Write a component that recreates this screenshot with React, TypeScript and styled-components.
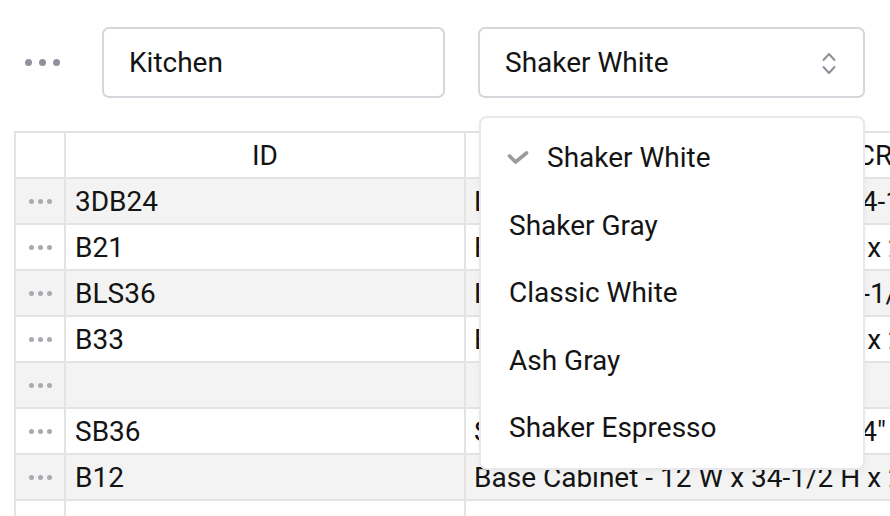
import React from "react";
import styled, { createGlobalStyle } from "styled-components";

const Global = createGlobalStyle`
  html, body { margin: 0; padding: 0; background: #ffffff; overflow: hidden; }
  body { font-family: Roboto, "Liberation Sans", Arial, sans-serif; color: #141414; }
  * { box-sizing: border-box; }
`;

const Page = styled.div`
  position: relative;
  width: 890px;
  height: 516px;
  overflow: hidden;
  background: #fff;
`;

const Toolbar = styled.div`
  display: flex;
  align-items: center;
  padding: 27px 0 0 25px;
`;

const Dots = styled.div<{ $size: number; $gap: number; $color: string }>`
  display: flex;
  align-items: center;
  gap: ${(p) => p.$gap}px;
  & > span {
    width: ${(p) => p.$size}px;
    height: ${(p) => p.$size}px;
    border-radius: 50%;
    background: ${(p) => p.$color};
  }
`;

const TextField = styled.input`
  margin-left: 42px;
  width: 343px;
  height: 71px;
  border: 2px solid #d4d7dc;
  border-radius: 7px;
  padding: 0 25px;
  font-family: Roboto, "Liberation Sans", Arial, sans-serif;
  font-size: 28px;
  color: #141414;
  background: #fff;
  outline: none;
`;

const SelectWrap = styled.div`
  position: relative;
  margin-left: 33px;
  width: 387px;
`;

const SelectButton = styled.div`
  display: flex;
  align-items: center;
  justify-content: space-between;
  height: 71px;
  border: 2px solid #d4d7dc;
  border-radius: 7px;
  padding: 0 27px 0 25px;
  font-size: 28px;
  color: #141414;
  background: #fff;
`;

const Menu = styled.div`
  position: absolute;
  top: calc(100% + 18px);
  left: 1px;
  right: 0;
  height: 354px;
  z-index: 10;
  background: #fff;
  border: 2px solid #e7e7ec;
  border-radius: 8px;
  padding: 6px 0 6px;
  box-shadow: 0 2px 6px rgba(0, 0, 0, 0.04);
`;

const MenuItem = styled.div`
  display: flex;
  align-items: center;
  height: 67.5px;
  padding-left: 28px;
  font-size: 28px;
  color: #141414;
  gap: 18px;
`;

const CheckIcon = styled.svg`
  margin-left: -2px;
  flex: none;
`;

const Table = styled.div`
  margin: 33px 0 0 14px;
  display: grid;
  grid-template-columns: 50px 400px 857px;
  grid-auto-rows: 46px;
  border-left: 2px solid #e3e3e3;
  border-top: 2px solid #e3e3e3;
  width: max-content;
`;

const Cell = styled.div<{ $alt?: boolean; $align?: "left" | "center"; $pad?: number }>`
  display: flex;
  align-items: center;
  justify-content: ${(p) => (p.$align === "center" ? "center" : "flex-start")};
  padding-left: ${(p) => p.$pad ?? 0}px;
  border-right: 2px solid #e3e3e3;
  border-bottom: 2px solid #e3e3e3;
  background: ${(p) => (p.$alt ? "#f3f3f3" : "#ffffff")};
  font-size: 28px;
  color: #141414;
  white-space: nowrap;
  overflow: hidden;
`;

const Chevrons = () => (
  <svg width="14" height="24" viewBox="0 0 14 24" fill="none">
    <path d="M1.5 9 L7 3 L12.5 9" stroke="#8b9099" strokeWidth="2" strokeLinecap="round" strokeLinejoin="round" />
    <path d="M1.5 16 L7 22 L12.5 16" stroke="#8b9099" strokeWidth="2" strokeLinecap="round" strokeLinejoin="round" />
  </svg>
);

const Check = () => (
  <CheckIcon width="22" height="14" viewBox="0 0 22 14" fill="none">
    <path d="M2.5 5 L8.5 11 L19.5 2" stroke="#9b9b9b" strokeWidth="3.6" strokeLinecap="round" strokeLinejoin="round" />
  </CheckIcon>
);

const ThreeDots = ({ size, gap, color }: { size: number; gap: number; color: string }) => (
  <Dots $size={size} $gap={gap} $color={color}>
    <span />
    <span />
    <span />
  </Dots>
);

const rows: { id: string; desc: string }[] = [
  { id: "3DB24", desc: "Drawer Base Cabinet - 24 W x 34-1/2 H x 24\" D" },
  { id: "B21", desc: "Base Cabinet - 21 W x 34-1/2 H x 24\" D" },
  { id: "BLS36", desc: "Lazy Susan Cabinet - 36 W x 34-1/2 H x 24\" D" },
  { id: "B33", desc: "Base Cabinet - 33 W x 34-1/2 H x 24\" D" },
  { id: "", desc: "" },
  { id: "SB36", desc: "Sink Base - 36 W x 34-1/2 H x 24\" D" },
  { id: "B12", desc: "Base Cabinet - 12 W x 34-1/2 H x 24\" D" },
];

const options = ["Shaker White", "Shaker Gray", "Classic White", "Ash Gray", "Shaker Espresso"];

export default function App() {
  return (
    <Page>
      <Global />
      <Toolbar>
        <ThreeDots size={7} gap={7} color="#8e939b" />
        <TextField defaultValue="Kitchen" />
        <SelectWrap>
          <SelectButton>
            <span>Shaker White</span>
            <Chevrons />
          </SelectButton>
          <Menu>
            {options.map((o, i) => (
              <MenuItem key={o}>
                {i === 0 && <Check />}
                <span>{o}</span>
              </MenuItem>
            ))}
          </Menu>
        </SelectWrap>
      </Toolbar>
      <Table>
        <Cell />
        <Cell $align="center">ID</Cell>
        <Cell $align="center">DESCRIPTION</Cell>
        {rows.map((r, i) => (
          <React.Fragment key={i}>
            <Cell $alt={i % 2 === 0} $align="center">
              <ThreeDots size={5} gap={4} color="#a7abb0" />
            </Cell>
            <Cell $alt={i % 2 === 0} $pad={9}>{r.id}</Cell>
            <Cell $alt={i % 2 === 0} $pad={8}>{r.desc}</Cell>
          </React.Fragment>
        ))}
        <Cell />
        <Cell />
        <Cell />
      </Table>
    </Page>
  );
}
